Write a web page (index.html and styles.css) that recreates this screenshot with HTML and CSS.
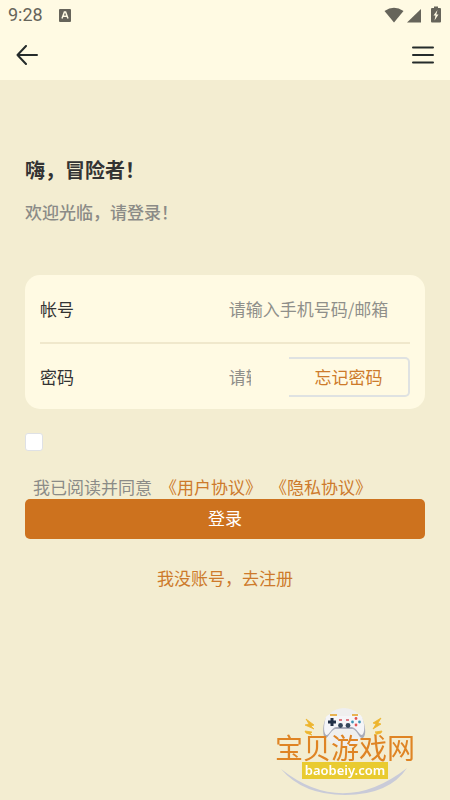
FILE: index.html
```html
<!DOCTYPE html>
<html lang="zh-CN">
<head>
<meta charset="utf-8">
<meta name="viewport" content="width=device-width, initial-scale=1">
<title>登录</title>
<link rel="stylesheet" href="styles.css">
</head>
<body>
<header class="top">
  <div class="status">
    <span class="time">9:28</span>
    <svg class="status-app" width="12" height="13" viewBox="0 0 12 13"><rect width="12" height="13" rx="1" fill="#66645a"/><path d="M3 9.500 5.400 3h1.200L9 9.500M4 7.300h4" fill="none" stroke="#fffae3" stroke-width="1.500"/></svg>
    <svg class="status-icons" width="58" height="18" viewBox="0 0 58 18" fill="#66645a"><path d="M.5 5Q10-1.500 19.500 5L10 16.500z"/><path d="M23 16.500 37 3v13.500z"/><path d="M48 2h2V.500h4V2h2q1 0 1 1v12.500q0 1-1 1h-8q-1 0-1-1V3q0-1 1-1z"/><path d="M53.500 4 49.500 9.500h2L50.500 14.500 54.500 8.500h-2.200z" fill="#fffae3"/></svg>
  </div>
  <nav class="nav">
    <button class="icon-button" type="button" aria-label="返回"><svg width="22" height="20" viewBox="0 0 22 20"><path d="M10 1 1.500 10 10 19M1.500 10H21" fill="none" stroke="#252b2b" stroke-width="2" stroke-linecap="round" stroke-linejoin="round"/></svg></button>
    <button class="icon-button" type="button" aria-label="菜单"><svg width="22" height="20" viewBox="0 0 22 20"><path d="M1 2.500h20M1 10h20M1 17.500h20" fill="none" stroke="#252b2b" stroke-width="2" stroke-linecap="round"/></svg></button>
  </nav>
</header>
<main class="page">
  <h1 class="title">嗨，冒险者！</h1>
  <p class="subtitle">欢迎光临，请登录！</p>
  <form class="form">
    <div class="card">
      <div class="row">
        <label class="label" for="account">帐号</label>
        <input class="field" id="account" type="text" placeholder="请输入手机号码/邮箱">
      </div>
      <div class="row">
        <label class="label" for="password">密码</label>
        <div class="password">
          <input class="field" id="password" type="password" placeholder="请输入密码">
          <button class="forgot" type="button">忘记密码</button>
        </div>
      </div>
    </div>
    <input class="check" id="agree" type="checkbox">
    <div class="agreement"><label for="agree">我已阅读并同意</label><a class="link" href="#terms">《用户协议》</a><a class="link" href="#privacy">《隐私协议》</a></div>
    <button class="submit" type="submit">登录</button>
  </form>
  <a class="link register" href="#register">我没账号，去注册</a>
</main>
<aside class="brand">
  <svg class="brand-art" width="150" height="100" viewBox="0 0 150 100">
    <circle cx="74" cy="28" r="20" fill="#efefef"/>
    <path d="M11 69Q73 118 137 68Q119 95 75 95Q33 95 11 69z" fill="#c9cbd8"/>
    <path d="M56 18C59 14 65 15 68 17H80C84 14 90 14 92 18C95 24 97 35 93 38C89 39 88 31 83 29H65C60 31 58 39 55 38C52 34 53 23 56 18z" fill="#a9acba"/>
    <path d="M56 17C59 13 65 15 68 16H80C84 13 90 13 92 17C95 24 95 33 92 35C89 35 87 28 82 27H66C61 28 59 36 56 35C53 32 54 23 56 17z" fill="#f5f5f8"/>
    <path d="M60 15h7M82 15h6" stroke="#e8b353" stroke-width="2"/>
    <path d="M62 18v8M58 22h8" stroke="#223047" stroke-width="3"/>
    <circle cx="70.500" cy="25.500" r="2.400" fill="#34465b"/><circle cx="78" cy="25.500" r="2.400" fill="#34465b"/>
    <path d="M69 20h3M76 20h3" stroke="#d64f5b" stroke-width="1.500"/>
    <g fill="#e35454"><circle cx="86" cy="18.500" r="1.400"/><circle cx="86" cy="25" r="1.400"/></g><g fill="#3c94b4"><circle cx="82.500" cy="22" r="1.400"/><circle cx="89.500" cy="22" r="1.400"/></g>
    <path d="M36 19 44 25 41 26 44 29 35 25 39 24zM35 31 42 32 40 34 42 35 36 33zM111 18 103 23 106 24 103 29 111 24 108 23zM112 31 105 32 107 33 104 35 111 33z" fill="#edb52e" stroke="#edb52e" stroke-width=".8"/>
  </svg>
  <div class="brand-text">
    <span class="brand-name">宝贝游戏网</span>
    <span class="brand-url">baobeiy.com</span>
  </div>
</aside>
</body>
</html>
```
FILE: styles.css
```css
* { box-sizing: border-box; }

body {
  margin: 0;
  min-height: 100vh;
  background: #f3edd1;
  color: #333;
  font: 17px/26px "Noto Sans CJK SC", sans-serif;
}

button, input { font: inherit; color: inherit; margin: 0; }
button { padding: 0; cursor: pointer; }

.top { background: #fffae3; }

.status {
  display: flex;
  align-items: center;
  height: 30px;
  padding: 0 8px;
  color: #66645a;
}

.time { font: 18px/30px Roboto, sans-serif; }
.status-app { margin-left: 16px; }
.status-icons { margin-left: auto; }

.nav {
  display: flex;
  justify-content: space-between;
  align-items: center;
  height: 50px;
  padding: 0 16px;
}

.icon-button {
  display: flex;
  border: 0;
  background: none;
}

.page { padding: 75px 25px 40px; }

.title {
  margin: 0;
  font-size: 20px;
  line-height: 30px;
}

.subtitle {
  margin: 14px 0 50px;
  color: #8b8b87;
  font-weight: 500;
}

.card {
  padding: 0 15px;
  border-radius: 15px;
  background: #fffae3;
}

.row {
  display: grid;
  grid-template-columns: 51% 1fr;
  align-items: center;
  height: 65px;
}

.row:first-child {
  height: 69px;
  border-bottom: 2px solid #f0e8cc;
}

.field {
  width: 100%;
  min-width: 0;
  padding: 0;
  border: 0;
  outline: 0;
  background: none;
}

.field::placeholder { color: #8f8f8a; opacity: 1; }

.password {
  display: grid;
  grid-template-columns: 22px 121px;
  justify-content: space-between;
  align-items: center;
}

.forgot {
  height: 40px;
  border: 2px solid #dfe2e2;
  border-left: 0;
  border-radius: 0 5px 5px 0;
  background: none;
  color: #cd7a2b;
}

.check {
  display: block;
  appearance: none;
  width: 18px;
  height: 18px;
  margin: 24px 0;
  border: 1px solid #dfe1e5;
  border-radius: 3px;
  background: #fff;
}

.check:checked { background: #cd721e; }

.agreement {
  display: flex;
  gap: 8px;
  padding-left: 8px;
  line-height: 24px;
  color: #8b8b87;
}

.link { color: #cd7a2b; text-decoration: none; }

.submit {
  display: block;
  width: 100%;
  height: 40px;
  padding-bottom: 2px;
  border: 0;
  border-radius: 5px;
  background: #cd721e;
  color: #fff;
}

.register {
  display: block;
  margin-top: 26px;
  text-align: center;
}

.brand {
  position: fixed;
  right: 30px;
  bottom: 0;
  width: 150px;
  height: 100px;
}

.brand-art { display: block; }

.brand-text {
  position: absolute;
  inset: 33px 0 0;
  display: flex;
  flex-direction: column;
  align-items: center;
}

.brand-name {
  color: #df8424;
  font-size: 28px;
  line-height: 29px;
}

.brand-url {
  padding: 0 3px;
  background: #e9cb30;
  color: #fff;
  font: 600 13px/17px "Noto Sans", sans-serif;
}
```
